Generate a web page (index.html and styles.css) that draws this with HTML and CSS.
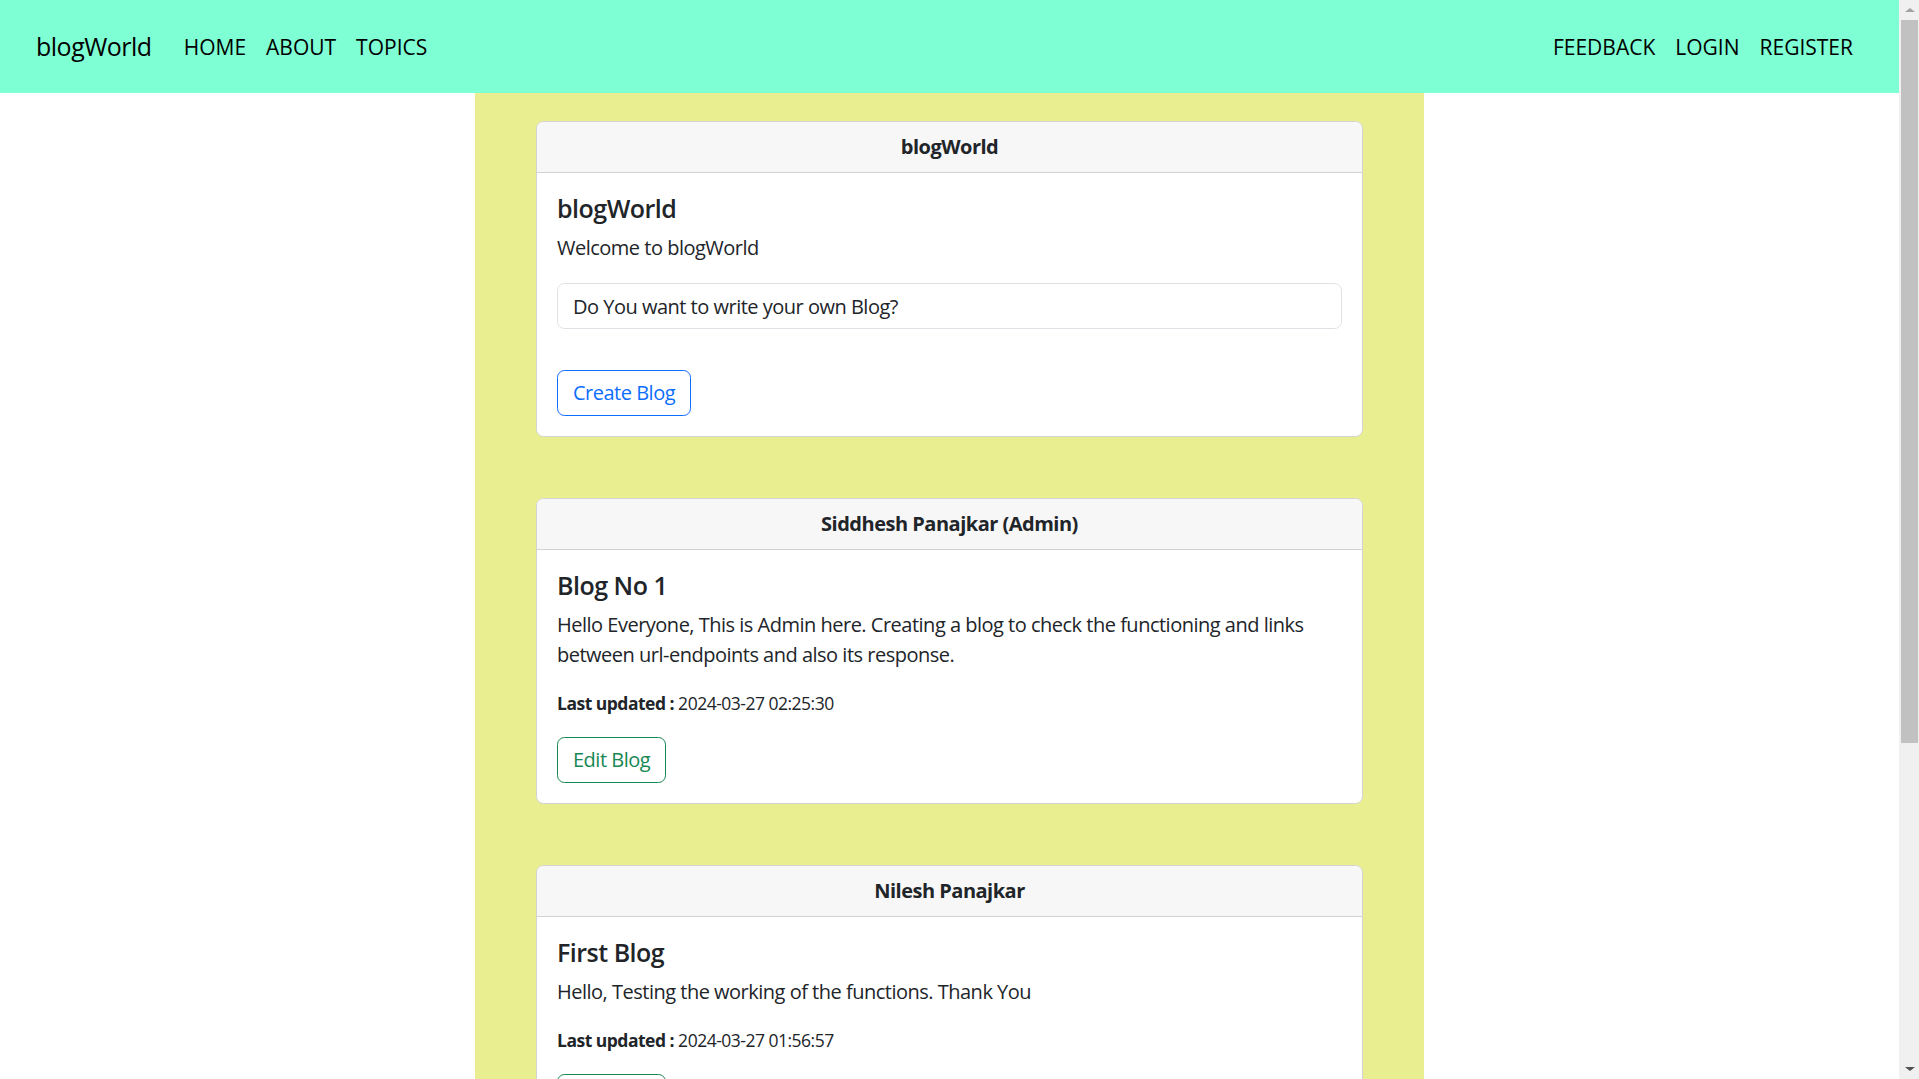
FILE: index.html
```html
<!DOCTYPE html>
<html lang="en">
<head>
<meta charset="utf-8">
<title>blogWorld</title>
<link rel="stylesheet" href="styles.css">
</head>
<body>
<div class="app">
  <nav class="navbar">
    <div class="nav-left">
      <a class="brand" href="#">blogWorld</a>
      <ul class="nav-links">
        <li><a href="#">HOME</a></li>
        <li><a href="#">ABOUT</a></li>
        <li><a href="#">TOPICS</a></li>
      </ul>
    </div>
    <ul class="nav-links">
      <li><a href="#">FEEDBACK</a></li>
      <li><a href="#">LOGIN</a></li>
      <li><a href="#">REGISTER</a></li>
    </ul>
  </nav>
  <main class="page">
    <div class="column">
      <section class="card">
        <div class="card-header">blogWorld</div>
        <div class="card-body">
          <h5 class="card-title">blogWorld</h5>
          <p class="card-text">Welcome to blogWorld</p>
          <input class="form-control" type="text" value="Do You want to write your own Blog?" readonly>
          <div class="actions actions-create">
            <a class="btn btn-blue" href="#">Create Blog</a>
          </div>
        </div>
      </section>
      <section class="card">
        <div class="card-header">Siddhesh Panajkar (Admin)</div>
        <div class="card-body">
          <h5 class="card-title">Blog No 1</h5>
          <p class="card-text">Hello Everyone, This is Admin here. Creating a blog to check the functioning and links between url-endpoints and also its response.</p>
          <p class="meta"><b>Last updated :</b> 2024-03-27 02:25:30</p>
          <div class="actions">
            <a class="btn btn-green" href="#">Edit Blog</a>
          </div>
        </div>
      </section>
      <section class="card">
        <div class="card-header">Nilesh Panajkar</div>
        <div class="card-body">
          <h5 class="card-title">First Blog</h5>
          <p class="card-text">Hello, Testing the working of the functions. Thank You</p>
          <p class="meta"><b>Last updated :</b> 2024-03-27 01:56:57</p>
          <div class="actions">
            <a class="btn btn-green" href="#">Edit Blog</a>
          </div>
        </div>
      </section>
    </div>
  </main>
</div>
<div class="scrollbar" aria-hidden="true">
  <span class="sb-button"><span class="sb-arrow sb-up"></span></span>
  <span class="sb-thumb"></span>
  <span class="sb-space"></span>
  <span class="sb-button"><span class="sb-arrow sb-down"></span></span>
</div>
</body>
</html>
```
FILE: styles.css
```css
* { box-sizing: border-box; }

html {
  font-family: "Open Sans", "Noto Sans", sans-serif;
  color: #212529;
}

body {
  margin: 0;
  font-size: 20px;
  line-height: 30px;
  letter-spacing: -0.025em;
  background: #ffffff;
  display: flex;
  align-items: flex-start;
  height: 100vh;
  overflow: hidden;
}

a { text-decoration: none; color: inherit; }

.app {
  flex: 1;
  min-width: 0;
}

/* drawn scrollbar */
.scrollbar {
  flex: none;
  width: 20px;
  height: 100vh;
  background: #f0f0f0;
  display: flex;
  flex-direction: column;
}

.sb-button {
  height: 20px;
  display: flex;
  align-items: center;
  justify-content: center;
  padding-left: 1px;
}

.sb-arrow {
  width: 0;
  height: 0;
  border-left: 5px solid transparent;
  border-right: 5px solid transparent;
}

.sb-up { border-bottom: 4px solid #a3a3a3; }
.sb-down { border-top: 4px solid #505050; }

.sb-thumb {
  height: 723px;
  margin: 0 1px 0 2px;
  background: #c1c1c1;
}

.sb-space { flex: 1; }

.navbar {
  height: 93px;
  background: #7fffd4;
  display: flex;
  align-items: center;
  justify-content: space-between;
  padding: 0 36px;
  letter-spacing: 0;
}

.nav-left {
  display: flex;
  align-items: center;
}

.brand {
  font-size: 25px;
  line-height: 37px;
  margin-right: 22px;
  letter-spacing: -0.02em;
  color: #000;
}

.nav-links {
  list-style: none;
  margin: 0;
  padding: 0;
  display: flex;
}

.nav-links a {
  display: block;
  padding: 10px 10px;
  font-size: 21px;
  line-height: 30px;
  color: #000;
}

.page {
  display: flex;
  justify-content: center;
}

.column {
  width: 949px;
  background: #e9ee91;
  padding: 28px 61px 411px;
  display: flex;
  flex-direction: column;
  gap: 61px;
}

.card {
  background: #fff;
  border: 1px solid #d3d3d3;
  border-radius: 7.5px;
  overflow: hidden;
}

.card-header {
  background: #f7f7f7;
  border-bottom: 1px solid #d3d3d3;
  padding: 10px 20px;
  text-align: center;
  font-weight: 700;
}

.card-body {
  padding: 20px;
}

.card-title {
  margin: 0 0 10px;
  font-size: 25px;
  line-height: 30px;
  font-weight: 600;
}

.card-text {
  margin: 0 0 20px;
}

.meta {
  margin: 0 0 21px;
  font-size: 17.5px;
  line-height: 26px;
}

.meta b { font-weight: 700; }

.form-control {
  display: block;
  width: 100%;
  height: 46px;
  padding: 7px 15px;
  font-family: inherit;
  font-size: 20px;
  line-height: 30px;
  letter-spacing: -0.025em;
  color: #212529;
  background: #fff;
  border: 1px solid #dee2e6;
  border-radius: 7.5px;
  outline: none;
}

.actions { display: flex; }

.actions-create { margin-top: 41px; }

.btn {
  display: inline-block;
  padding: 7px 15px;
  font-size: 20px;
  line-height: 30px;
  border: 1px solid;
  border-radius: 7.5px;
  background: transparent;
}

.btn-blue { color: #0d6efd; border-color: #0d6efd; }
.btn-green { color: #198754; border-color: #198754; }
```
